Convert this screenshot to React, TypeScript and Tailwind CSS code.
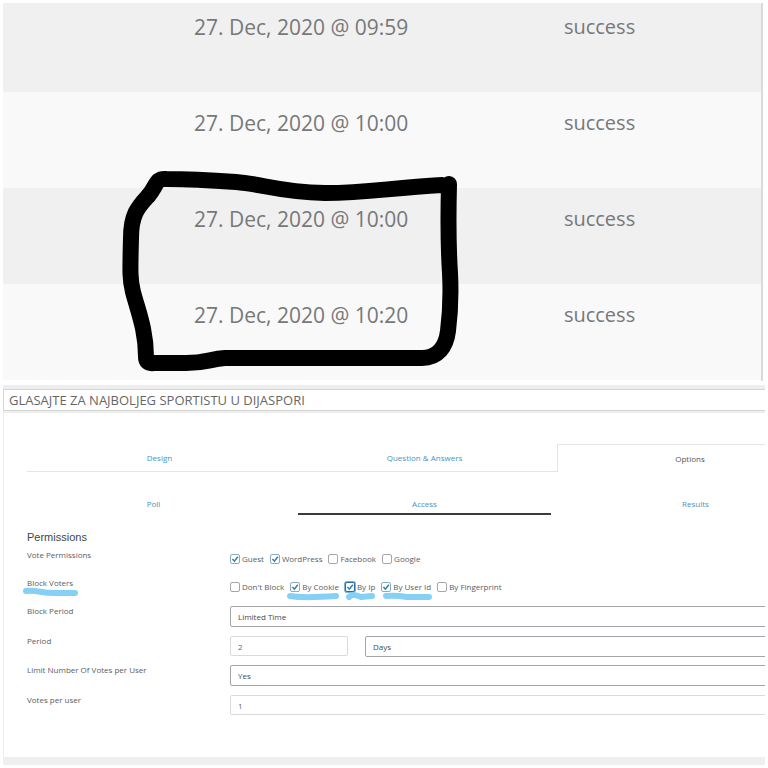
import { useState } from 'react';
import clsx from 'clsx';

interface LogRow {
  date: string;
  status: string;
}

interface Option {
  label: string;
  checked?: boolean;
  focused?: boolean;
  mark?: string;
}

const rows: LogRow[] = [
  { date: '27. Dec, 2020 @ 09:59', status: 'success' },
  { date: '27. Dec, 2020 @ 10:00', status: 'success' },
  { date: '27. Dec, 2020 @ 10:00', status: 'success' },
  { date: '27. Dec, 2020 @ 10:20', status: 'success' },
];

const tabs = ['Design', 'Question & Answers', 'Options'];
const subTabs = ['Poll', 'Access', 'Results'];

const votePermissions: Option[] = [
  { label: 'Guest', checked: true },
  { label: 'WordPress', checked: true },
  { label: 'Facebook' },
  { label: 'Google' },
];

const blockVoters: Option[] = [
  { label: "Don't Block" },
  { label: 'By Cookie', checked: true, mark: 'M0 4 C12 6 32 5 46 4' },
  { label: 'By Ip', checked: true, focused: true, mark: 'M4 5 C8 2 11 3 16 5 L27 4' },
  { label: 'By User Id', checked: true, mark: 'M5 4 C14 3 20 4 26 5 L48 5' },
  { label: 'By Fingerprint' },
];

const selectClass =
  'block h-[21px] w-full appearance-none rounded-xs border border-[#a3a5a8] bg-white px-[7px] text-[8px] leading-[10px] text-[#45494d] outline-none';
const inputClass =
  'block h-5 w-full rounded-xs border border-[#d9dadb] bg-white px-[7px] text-[8px] leading-[10px] text-[#666] outline-none';

function Marker({ d, className }: { d: string; className?: string }) {
  return (
    <svg className={clsx('pointer-events-none absolute overflow-visible', className)} width="50" height="8" aria-hidden="true">
      <path d={d} fill="none" stroke="#86d0f6" strokeWidth="6" strokeLinecap="round" strokeLinejoin="round" />
    </svg>
  );
}

function LogTable() {
  return (
    <section className="relative mr-[5px] h-[378px] overflow-hidden border-r-2 border-[#d9dadc]">
      <table className="-mt-[7px] w-full table-fixed text-left text-[#77787a]">
        <tbody>
          {rows.map((row, i) => (
            <tr key={i} className={clsx('h-24 align-top', i % 2 === 0 ? 'bg-[#f0f0f0]' : 'bg-[#f9f9f9]')}>
              <td className="w-[74%] pt-4 pl-[191px] text-[21px] leading-[30px] whitespace-nowrap">{row.date}</td>
              <td className="pt-4 text-[20px] leading-[30px]">{row.status}</td>
            </tr>
          ))}
        </tbody>
      </table>
      {/* Hand drawn outline round the last two dates */}
      <svg className="pointer-events-none absolute top-[165px] left-[115px]" width="350" height="210" aria-hidden="true">
        <path
          d="M331 16 C330 55 330 75 332 105 C333 125 333 140 330 163 C328 179 320 190 304 190 L107 190 C92 191 88 195 68 195 L35 195 Q28 196 28 189 C28 162 20 143 15 124 C12 112 12 106 13 70 C13 45 21 38 31 27 C39 17 38 10 48 11 C68 11 90 12 118 14 C145 16 160 24 207 25 C250 25 270 20 324 17"
          fill="none"
          stroke="#000"
          strokeWidth="16"
          strokeLinecap="round"
          strokeLinejoin="round"
        />
      </svg>
    </section>
  );
}

function Check({ option }: { option: Option }) {
  const [checked, setChecked] = useState(!!option.checked);
  return (
    <label className="relative flex items-center gap-[2px] whitespace-nowrap">
      <span className="relative block size-[10px]">
        <input
          type="checkbox"
          checked={checked}
          onChange={e => setChecked(e.target.checked)}
          className={clsx(
            'block size-[10px] appearance-none rounded-xs border bg-white',
            option.focused ? 'border-[#276d98] ring-1 ring-[#7fb2d2]' : checked ? 'border-[#8badc1]' : 'border-[#a5a7aa]'
          )}
        />
        {checked && (
          <svg className="pointer-events-none absolute inset-0" viewBox="0 0 10 10" aria-hidden="true">
            <path d="M2.4 5.1 4.4 7.2 7.8 2.7" fill="none" stroke="#2f7fae" strokeWidth="1.5" />
          </svg>
        )}
      </span>
      {option.label}
      {option.mark && <Marker d={option.mark} className="top-[10px] left-0" />}
    </label>
  );
}

function CheckRow({ title, options, marked }: { title: string; options: Option[]; marked?: boolean }) {
  return (
    <fieldset className="flex h-7 items-start">
      <legend className="relative float-left w-[203px] leading-[10px]">
        {title}
        {marked && <Marker d="M-1 4 C10 3 14 6 27 6 L48 6" className="top-[9px] left-0" />}
      </legend>
      <div className="flex gap-[6px] pt-1 leading-[10px]">
        {options.map(o => <Check key={o.label} option={o} />)}
      </div>
    </fieldset>
  );
}

function Field({ label, id, children }: { label: string; id: string; children: React.ReactNode }) {
  return (
    <div className="mb-[9px] flex">
      <label htmlFor={id} className="w-[203px] shrink-0 leading-[10px]">{label}</label>
      <div className="flex min-w-0 flex-1 gap-[17px]">{children}</div>
    </div>
  );
}

function PollForm() {
  return (
    <form className="pt-[15px] text-[8px] text-[#5a5d60]" onSubmit={e => e.preventDefault()}>
      <h2 className="mb-[6px] font-['Liberation_Sans',sans-serif] text-[11px] leading-[14px] text-[#444]">Permissions</h2>
      <CheckRow title="Vote Permissions" options={votePermissions} />
      <CheckRow title="Block Voters" options={blockVoters} marked />
      <Field label="Block Period" id="block-period">
        <select id="block-period" className={selectClass}>
          <option>Limited Time</option>
        </select>
      </Field>
      <Field label="Period" id="period">
        <div className="w-[118px] shrink-0">
          <input id="period" type="text" defaultValue="2" className={inputClass} />
        </div>
        <select aria-label="Period unit" className={clsx(selectClass, '-mb-px')}>
          <option>Days</option>
        </select>
      </Field>
      <Field label="Limit Number Of Votes per User" id="limit">
        <select id="limit" className={selectClass}>
          <option>Yes</option>
        </select>
      </Field>
      <Field label="Votes per user" id="votes">
        <input id="votes" type="text" defaultValue="1" className={inputClass} />
      </Field>
    </form>
  );
}

export default function App() {
  return (
    <main className="overflow-hidden bg-white py-[3px] pl-[3px] font-['Open_Sans','Noto_Sans',sans-serif]">
      <LogTable />
      <section className="mt-1 mr-[3px] overflow-hidden">
        <div className="bg-[#eee] pt-1 pb-[2px]">
          <input
            type="text"
            aria-label="Poll title"
            defaultValue="GLASAJTE ZA NAJBOLJEG SPORTISTU U DIJASPORI"
            className="block h-[22px] w-full border border-r-0 border-[#d5d5d5] bg-white px-[5px] text-[13px] text-[#666] outline-none"
          />
        </div>
        <div className="border-l border-[#eee] pt-[31px] pb-[33px] pl-[23px]">
          {/* The panel runs on past the right edge */}
          <div className="-mr-[57px]">
            <nav className="grid grid-cols-3 text-center text-[8px]">
              {tabs.map(tab => (
                <a
                  key={tab}
                  href="#"
                  className={clsx(
                    'h-7 border-[#e5e5e5] pt-2 leading-3',
                    tab === 'Options' ? 'border-t border-l text-[#555]' : 'border-b text-[#4b93bd]'
                  )}
                >
                  {tab}
                </a>
              ))}
            </nav>
            <nav className="mt-[26px] grid grid-cols-3 gap-[18px] text-center text-[8px] text-[#4b93bd]">
              {subTabs.map(tab => (
                <a
                  key={tab}
                  href="#"
                  className={clsx('h-[17px] border-b-2 leading-3', tab === 'Access' ? 'border-[#3c3c40]' : 'border-transparent')}
                >
                  {tab}
                </a>
              ))}
            </nav>
            <PollForm />
          </div>
        </div>
        <div className="h-2 bg-[#efefef]" />
      </section>
    </main>
  );
}
